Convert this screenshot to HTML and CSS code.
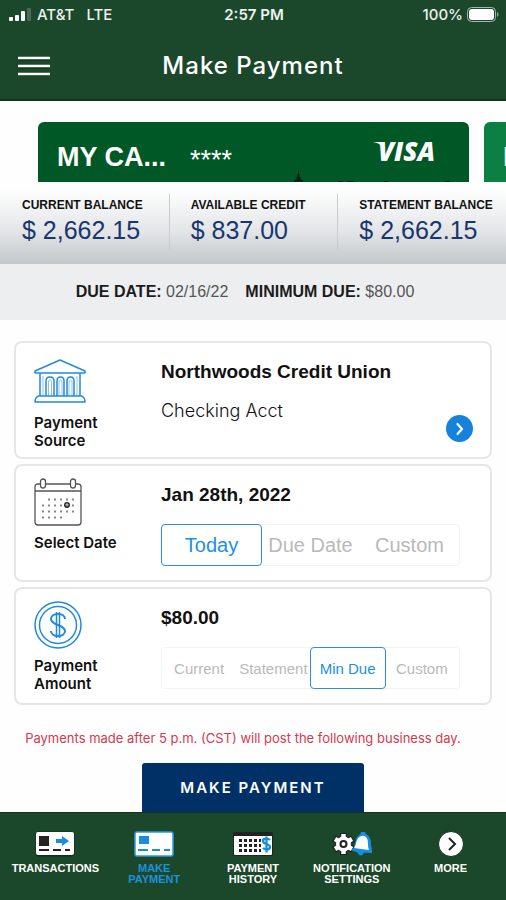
FILE: index.html
```html
<!DOCTYPE html>
<html lang="en">
<head>
<meta charset="utf-8">
<meta name="viewport" content="width=device-width, initial-scale=1">
<title>Make Payment</title>
<link rel="stylesheet" href="styles.css">
</head>
<body>
<div class="app">
  <header class="header">
    <div class="status">
      <div class="status-left">
        <svg width="22" height="14" viewBox="0 0 22 14" aria-hidden="true"><g fill="#fff"><rect y="9" width="4" height="4" rx="1"/><rect x="6" y="7" width="4" height="6" rx="1"/><rect x="12" y="3" width="4" height="10" rx="1"/><rect x="18" width="4" height="13" rx="1" opacity=".2"/></g></svg>
        <span>AT&amp;T</span><span class="network">LTE</span>
      </div>
      <div class="clock">2:57 PM</div>
      <div class="status-right">
        <span>100%</span>
        <svg width="32" height="16" viewBox="0 0 32 16" aria-hidden="true"><rect x=".5" y=".5" width="28" height="14" rx="4" fill="none" stroke="#a5b7aa"/><rect x="2" y="2" width="25" height="11" rx="3" fill="#fff"/><path d="M30 5c2 1 2 4 0 5z" fill="#8fa696"/></svg>
      </div>
    </div>
    <div class="titlebar">
      <button class="menu" type="button" aria-label="Menu"><svg width="32" height="20" viewBox="0 0 32 20"><path d="M1 3h30M1 11h30M1 19h30" stroke="#0c3015" stroke-width="3"/><path d="M0 2h32M0 10h32M0 18h32" stroke="#fff" stroke-width="2.600"/></svg></button>
      <h1>Make Payment</h1>
    </div>
  </header>

  <main>
    <section class="carousel" aria-label="Cards">
      <div class="card">
        <span class="card-name">MY CA...</span>
        <span class="card-mask">****</span>
        <svg class="visa" width="64" height="34" viewBox="0 0 64 34" role="img" aria-label="Visa"><path d="M0 8h10l2 8C10 12 6 9 0 8z" fill="#fff"/><text x="5" y="27" class="visa-text">VISA</text></svg>
        <svg class="trees" width="160" height="14" viewBox="0 0 160 14" aria-hidden="true"><path d="M5 1l1 3-.500 1L7 7l-1 1 2 2-1 1 3 1v2H1v-2l3-1-1-1 2-2-1-1 1-2zM45 13h5v1h-5zM54 13h7v1h-7zM91 13h4v1h-4zM152 13h5v1h-5z" fill="#04240f"/></svg>
      </div>
      <div class="card card-next"><span class="card-name">MY CARD</span></div>
    </section>

    <dl class="balances">
      <div><dt>CURRENT BALANCE</dt><dd>$ 2,662.15</dd></div>
      <div><dt>AVAILABLE CREDIT</dt><dd>$ 837.00</dd></div>
      <div><dt>STATEMENT BALANCE</dt><dd>$ 2,662.15</dd></div>
    </dl>

    <div class="due">
      <span><strong>DUE DATE:</strong> 02/16/22</span>
      <span><strong>MINIMUM DUE:</strong> $80.00</span>
    </div>

    <form class="payment">
      <section class="panel">
        <div class="panel-label">
          <svg width="52" height="48" viewBox="0 0 52 48" fill="none" stroke="#2389dc" stroke-width="1.500" aria-hidden="true"><path d="M1 15v-2L26 2l25 11v2z" stroke-linejoin="round"/><path d="M6 15v23M46 15v23" /><path d="M9 18v20M43 18v20" stroke-width="1" stroke="#8fc0ec"/><path d="M12 38V23q0-4 4-4t4 4v15M23 38V23q0-4 3.500-4t3.500 4v15M33 38V23q0-4 3.500-4t3.500 4v15"/><path d="M14.500 38V24q0-2 1.500-2t1.500 2v14M25 38V24q0-2 1.500-2t1.500 2v14M35 38V24q0-2 1.500-2t1.500 2v14" stroke-width="1" stroke="#8fc0ec"/><path d="M4 38h44q3 2 3 6H1q0-4 3-6z" stroke-linejoin="round"/></svg>
          <h2>Payment<br>Source</h2>
        </div>
        <div class="panel-body">
          <p class="value">Northwoods Credit Union</p>
          <p class="account">Checking Acct</p>
        </div>
        <button class="go" type="button" aria-label="Change payment source"><svg width="27" height="27" viewBox="0 0 27 27"><path d="M11.500 9l4.500 5-4.500 5" fill="none" stroke="#fff" stroke-width="2.200" stroke-linecap="round" stroke-linejoin="round"/></svg></button>
      </section>

      <section class="panel">
        <div class="panel-label">
          <svg width="52" height="48" viewBox="0 0 52 48" fill="none" stroke="#555" stroke-width="1.300" aria-hidden="true"><path d="M6 6H4Q1 6 1 9v35q0 3 3 3h40q3 0 3-3V9q0-3-3-3h-2M12 6h24M1 13h46"/><rect x="6.500" y="1" width="5" height="9" rx="2.500"/><rect x="36.500" y="1" width="5" height="9" rx="2.500"/><path d="M14 21.500h27M8 27.500h33M8 33.500h33M8 39.500h20" stroke="#888" stroke-width="2" stroke-dasharray="2 4"/><circle cx="33" cy="27" r="2.200" stroke="#222" stroke-width="1.500"/></svg>
          <h2>Select Date</h2>
        </div>
        <div class="panel-body">
          <p class="value">Jan 28th, 2022</p>
          <div class="segments" role="group" aria-label="Payment date">
            <button type="button" aria-pressed="true">Today</button>
            <button type="button" aria-pressed="false">Due Date</button>
            <button type="button" aria-pressed="false">Custom</button>
          </div>
        </div>
      </section>

      <section class="panel">
        <div class="panel-label">
          <svg width="52" height="48" viewBox="0 0 52 48" fill="none" stroke="#2389dc" stroke-width="1.500" aria-hidden="true"><circle cx="24" cy="24" r="23"/><circle cx="24" cy="24" r="18.500"/><path d="M22.500 11v26M25.500 11v26"/><path d="M31 18c0-3-3-5-7-5s-7 2-7 5 3 4.500 7 6 7 3 7 6-3 5-7 5-7-2-7-5" stroke-width="2"/></svg>
          <h2>Payment<br>Amount</h2>
        </div>
        <div class="panel-body">
          <p class="value">$80.00</p>
          <div class="segments small" role="group" aria-label="Payment amount">
            <button type="button" aria-pressed="false">Current</button>
            <button type="button" aria-pressed="false">Statement</button>
            <button type="button" aria-pressed="true">Min Due</button>
            <button type="button" aria-pressed="false">Custom</button>
          </div>
        </div>
      </section>

      <p class="notice">Payments made after 5 p.m. (CST) will post the following business day.</p>
      <button class="submit" type="submit">MAKE PAYMENT</button>
    </form>
  </main>

  <nav class="tabs">
    <a href="#transactions">
      <svg width="40" height="26" viewBox="0 0 40 26" aria-hidden="true"><rect x=".5" y=".5" width="39" height="25" rx="3" fill="#102d1b"/><rect x="1" y="1" width="38" height="23" rx="2" fill="#fff"/><path d="M4 5h10v10H4z" fill="#242424"/><path d="M21 8h6V5l7 5-7 5v-3h-6z" fill="#178ddd"/><path d="M4 19h10M18 19h8M30 19h5" stroke="#222" stroke-width="2"/></svg>
      <span>TRANSACTIONS</span>
    </a>
    <a href="#payment" aria-current="page">
      <svg width="40" height="26" viewBox="0 0 40 26" aria-hidden="true"><rect x="1" y="1" width="38" height="24" rx="2" fill="#fff" stroke="#2c9ae5" stroke-width="1.500"/><path d="M5 5h10v8H5z" fill="#178ddd"/><path d="M4 19h10M18 19h8M30 19h6" stroke="#178ddd" stroke-width="2"/></svg>
      <span>MAKE<br>PAYMENT</span>
    </a>
    <a href="#history">
      <svg width="40" height="26" viewBox="0 0 40 26" aria-hidden="true"><rect x="0" y="1" width="40" height="24" rx="2" fill="#222"/><path d="M1 5h38v18q0 1-1 1H2q-1 0-1-1z" fill="#fff"/><path d="M6 9.500h22M6 14.500h22M6 19.500h22" stroke="#222" stroke-width="3" stroke-dasharray="3 2"/><path d="M37 9c-2-2-7-2-7 1 0 4 7 2 7 6 0 3-5 3-7 1M33.500 5.500v16" fill="none" stroke="#178ddd" stroke-width="2.300"/></svg>
      <span>PAYMENT<br>HISTORY</span>
    </a>
    <a href="#notifications">
      <svg width="40" height="26" viewBox="0 0 40 26" aria-hidden="true"><path d="M11.500 2v22M2 7.500l19 11M2 18.500l19-11" stroke="#222" stroke-width="7"/><path d="M11.500 3v20M3 8l17 10M3 18L20 8" stroke="#fff" stroke-width="4.500"/><circle cx="11.500" cy="13" r="7.500" fill="#fff"/><circle cx="11.500" cy="13" r="3" fill="#fff" stroke="#222" stroke-width="2"/><path d="M29 1.500h4l.500 2c4 1.500 5 5 5 10l1.500 8-8-.500c-1 4-6 4-6 0l-6-2c4-3 3-8 5-12 1-2 2-3 4-3.500z" fill="#168ee6" stroke="#168ee6"/><path d="M29.500 5c5-1 6.500 3 6.500 8 0 3 .5 4 1 6l-15-2c3-3 1-10 7.500-12z" fill="#fff"/></svg>
      <span>NOTIFICATION<br>SETTINGS</span>
    </a>
    <a href="#more">
      <svg width="40" height="26" viewBox="0 0 40 26" aria-hidden="true"><circle cx="20" cy="13" r="12.500" fill="#fff" stroke="#102d1b"/><path d="M18 7l6 6-6 6" fill="none" stroke="#222" stroke-width="2"/></svg>
      <span>MORE</span>
    </a>
  </nav>
</div>
</body>
</html>
```
FILE: styles.css
```css
* { box-sizing: border-box; }
body { margin: 0; background: #fefefe; color: #111; font-family: "Liberation Sans", Arial, sans-serif; }
h1, h2, p, dl, dd { margin: 0; }
button { font: inherit; padding: 0; border: 0; background: none; cursor: pointer; }
svg { display: block; }
.app { display: flex; flex-direction: column; min-height: 100vh; overflow: hidden; }

.header { background: #1b482b; color: #fff; border-bottom: 2px solid #0c3817; }
.status { display: grid; grid-template-columns: 1fr auto 1fr; align-items: center; height: 29px; padding: 0 7px 0 9px; font: 500 15px/20px Inter, sans-serif; color: #edf2ee; }
.status-left, .status-right { display: flex; align-items: center; gap: 6px; }
.status-right { justify-content: flex-end; gap: 4px; }
.network { margin-left: 6px; }
.clock { font-weight: 600; }
.titlebar { display: grid; grid-template-columns: 48px 1fr 48px; align-items: center; height: 70px; padding: 3px 18px 0; }
.titlebar h1 { font: 500 24px/32px Inter, sans-serif; letter-spacing: 1px; text-align: center; }

.carousel { display: flex; gap: 15px; padding: 21px 0 0 38px; overflow: hidden; }
.card { position: relative; flex: 0 0 calc(100% - 37px); display: flex; align-items: center; height: 60px; padding: 10px 32px 0 19px; border-radius: 6px 6px 0 0; background: #005826; color: #fff; }
.card-next { background: #0b8042; }
.card-name { font: bold 27px/32px "Liberation Sans", Arial, sans-serif; white-space: nowrap; }
.card-mask { margin-left: 24px; padding-top: 6px; font-size: 27px; line-height: 32px; }
.visa { margin: -12px 0 0 auto; overflow: visible; }
.visa-text { font: italic 800 26px "Open Sans", sans-serif; fill: #fff; }
.trees { position: absolute; right: 16px; bottom: 0; }

.balances { display: grid; grid-template-columns: repeat(3, 1fr); padding: 12px 0 14px; background: linear-gradient(#fefefe 10%, #e3e5e7 60%, #c3c7ca); }
.balances div { padding: 4px 0 5px 21px; border-left: 1px solid #c9cccf; white-space: nowrap; }
.balances div:first-child { border-color: transparent; }
.balances dt { font: 600 12px/15px "Liberation Sans", Arial, sans-serif; }
.balances dd { padding-top: 2px; font-size: 25px; line-height: 30px; color: #17366f; }

.due { display: flex; flex-wrap: wrap; justify-content: center; gap: 0 17px; padding: 18px 16px 18px 0; background: #eceef0; font-size: 16px; line-height: 20px; color: #555; }
.due strong { color: #1b1b1b; }

.payment { display: flex; flex-direction: column; gap: 5px; padding: 21px 14px 0; }
.panel { display: flex; align-items: stretch; min-height: 118px; padding: 15px 17px 7px 18px; border: 2px solid #e6e6e6; border-radius: 8px; background: #fff; }
.panel-label { flex: 0 0 127px; }
.panel-label h2 { padding-top: 8px; font: 600 15px/18px Inter, sans-serif; }
.panel + .panel { padding-top: 12px; }
.panel-body { flex: 1; min-width: 0; }
.panel + .panel .panel-body { padding-top: 3px; }
.value { font: bold 19px/28px "Liberation Sans", Arial, sans-serif; }
.account { padding-top: 11px; font: 300 18px/28px Inter, sans-serif; }
.go { align-self: flex-end; margin-bottom: 8px; border-radius: 50%; background: #1583dc; }
.segments { display: flex; margin: 15px 13px 0 0; border: 1px solid #f3f3f3; border-radius: 4px; }
.segments button { flex: 1 1 0; min-width: 0; height: 42px; margin: -1px; border: 1px solid transparent; border-radius: 4px; font-size: 20px; color: #b9b9b9; white-space: nowrap; }
.segments.small button { font-size: 15px; }
.segments button[aria-pressed="true"] { border-color: #2d8ee3; color: #1c8fe6; }

.notice { padding: 18px 20px 10px 0; text-align: center; font: 400 13px/20px Inter, sans-serif; color: #d23a50; }
.submit { align-self: center; width: 222px; height: 49px; border-radius: 3px 3px 0 0; background: #003166; color: #fff; font: 600 15px/20px Inter, sans-serif; letter-spacing: 2px; }

.tabs { display: grid; grid-template-columns: repeat(5, 1fr); flex: 1; padding: 18px 6px 8px; background: #1b482b; border-top: 1px solid #0c3817; }
.tabs a { display: flex; flex-direction: column; align-items: center; gap: 6px; color: #fff; text-align: center; text-decoration: none; font-weight: bold; font-size: 11px; line-height: 11px; }
.tabs a[aria-current] { color: #1d91dd; }
```
